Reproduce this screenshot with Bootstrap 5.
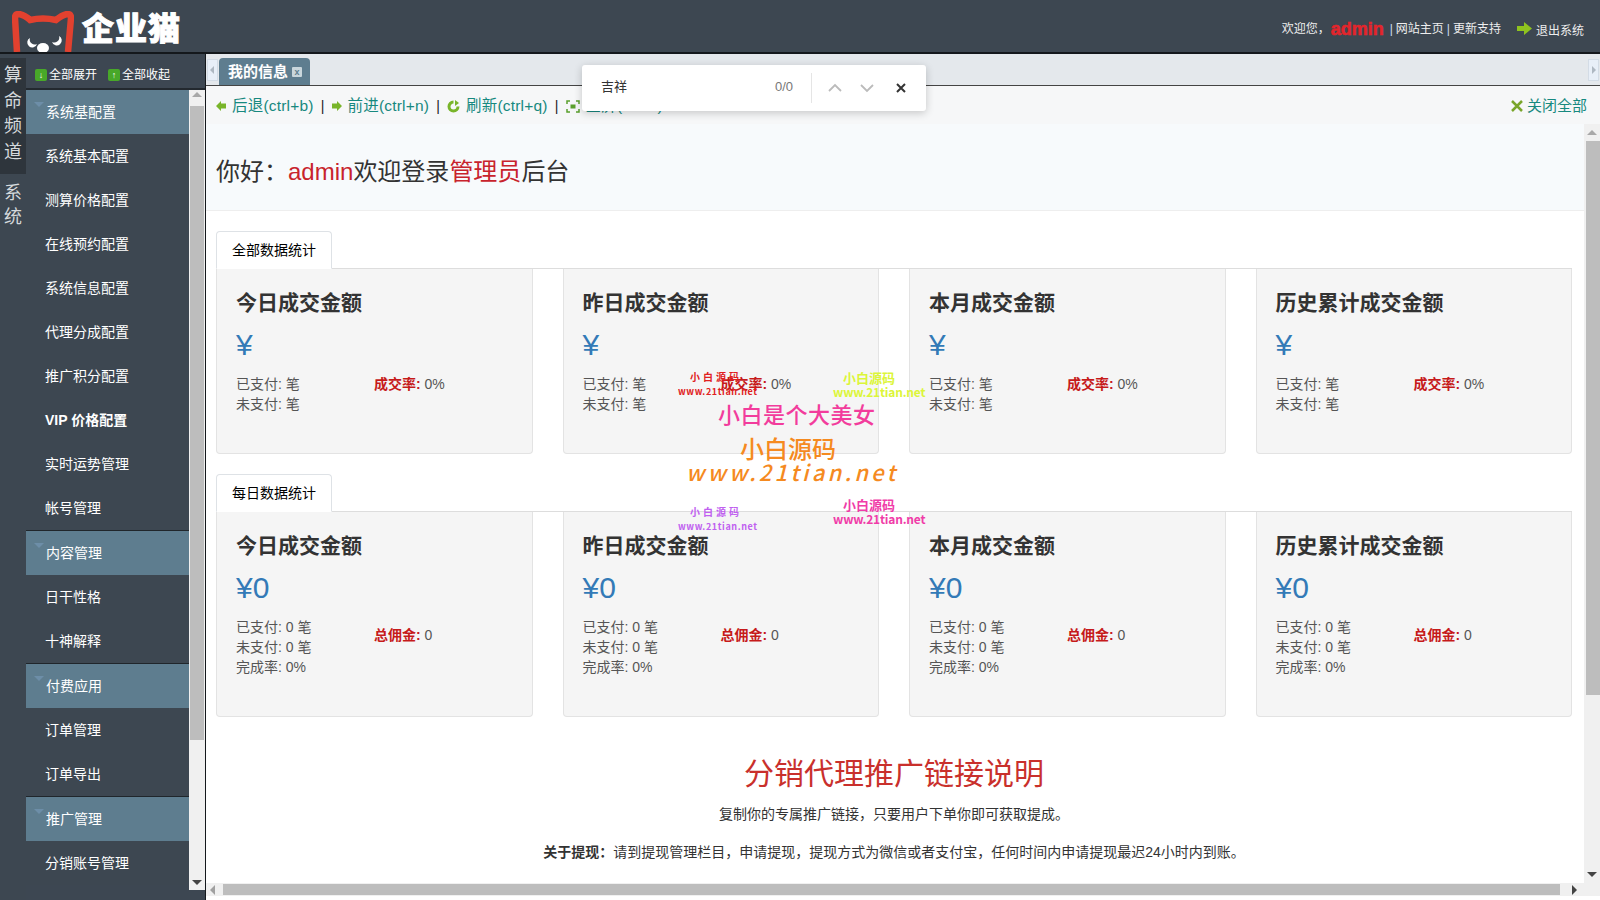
<!DOCTYPE html>
<html lang="zh-CN">
<head>
<meta charset="utf-8">
<title>企业猫后台</title>
<link rel="stylesheet" href="https://cdn.jsdelivr.net/npm/bootstrap@5.3.0/dist/css/bootstrap.min.css">
<style>
html,body{height:100%;overflow:hidden}
body{font-family:"Liberation Sans","Noto Sans CJK SC",sans-serif;font-size:14px;background:#3d4752;color:#333}
.top-bar{height:52px;background:#3d4751;color:#fff;overflow:hidden;flex:none}
.logo-word{font-family:"Noto Sans CJK SC",sans-serif;font-weight:900;font-size:32px;letter-spacing:1px;line-height:1;color:#fff;-webkit-text-stroke:1px #fff;margin-left:8px;margin-top:-1px}
.logo-svg{margin-left:12px;margin-top:11px;flex:none}
.top-links{font-size:12px;padding-right:16px;padding-top:5px;color:#eee}
.top-links .nm{color:#e3252c;font-weight:700;font-size:18px;-webkit-text-stroke:.6px #e3252c;margin:0 3px 0 1px;line-height:1}
.top-links .sp{color:#cde;margin:0 3px}
.body-row{height:848px;border-top:2px solid #14181c}
.rail{width:26px;flex:none;color:#d5d9dc;font-size:18px;line-height:25.500px;text-align:center;background:#3d4751;padding-top:4px}
.rail-on{background:#2e353c;height:116px;padding-top:5px}
.rail-off{padding-top:8px;line-height:23.500px}
.side{width:179px;flex:none}
.expand{height:36px;border-bottom:2px solid #23292f;color:#fff;font-size:12px;padding-left:9px;padding-top:7px;gap:11px;width:179px}
.expand span{gap:2px}
.ico-sq{width:12px;height:12px;background:#48a829;border-radius:2px;color:#fff;font-size:9px;line-height:12px;text-align:center;display:inline-block}
.side-body{height:800px}
.menu{width:163px;height:800px;overflow:hidden;flex:none}
.menu-head{height:44px;background:#5e7d8f;color:#fff;padding-left:20px;line-height:44px;position:relative;font-size:14px;border-bottom:0}
.menu-head.later{height:45px;border-top:1px solid #20262b}
.menu-head::before{content:"";position:absolute;left:8px;top:12px;border:5px solid transparent;border-top-color:#6d8ea8;border-bottom:0}
.menu-item{height:44px;line-height:44px;color:#fff;padding-left:19px;background:#3d4751;font-size:14px}
.vbar{width:16px;background:#f0f0f0;flex:none;position:relative}
.side-bar{height:800px}
.vthumb{background:#bdbdbd;width:14px;margin-left:1px}
.arr-t{position:absolute;left:3px;border:5px solid transparent;width:0;height:0}
.arr-up{top:2px;border-top:0;border-bottom-color:#a8a8a8}
.arr-dn{bottom:5px;border-bottom:0;border-top-color:#444}
.main-pane{border-left:1px solid #14181c;background:#fff;width:1395px;height:846px;flex:none}
.tab-strip{height:32px;background:#e4e8ec;border-bottom:1px solid #444;padding-top:4px;flex:none}
.scroller{width:11px;height:22px;background:#e8eff8;border:1px solid #d3dce6;margin:1px 1px 0 1px;flex:none;position:relative}
.scroller i{position:absolute;top:6px;left:2px;border:4px solid transparent}
.scroller .l{border-left:0;border-right-color:#aeb8c2}
.scroller .r{border-right:0;border-left-color:#aeb8c2;left:3px}
.tab-on{height:27px;width:91px;background:#5e7d8f;color:#fff;font-weight:700;font-size:15px;border-radius:4px 4px 0 0;padding-left:9px;gap:4px;line-height:25px;margin-left:0}
.tab-x{width:10px;height:10px;background:#c9d6dc;color:#5e7d8f;font-size:9px;line-height:10px;text-align:center;font-weight:700;border-radius:1px;display:inline-block}
.tools{height:38px;background:#f6f7f8;padding:2px 13px 0 10px;color:#17897f;font-size:15.500px;letter-spacing:.2px;flex:none}
.tools .pipe{color:#222;margin:0 7px 0 7px;font-size:14px}
.tools .tl-ic{margin-right:6px;flex:none}
.tools .close-all{font-size:15px;letter-spacing:0}
.scroll-wrap{height:759px;flex:none}
.scroll-view{width:1378px;height:759px;overflow:hidden;flex:none}
.hero{height:87px;background:#f7fafc;border-bottom:1px solid #eee;padding:0 0 0 10px;font-size:24px;color:#333;font-weight:400;line-height:95px}
.hero em{font-style:normal;color:#c8232c}
.stats{padding:20px 12px 0 10px}
.stats-tabs{border-bottom:1px solid #ddd;margin-bottom:0}
.stats-tabs .nav-link{padding:0 15px;height:38px;line-height:36px;color:#666;font-size:14px;border-color:#ddd #ddd #fff;border-radius:4px 4px 0 0;background:#fff;margin-bottom:-1px}
.gut-row{--bs-gutter-x:30px;--bs-gutter-y:0}
.stat-box{background:#f5f5f5;border:1px solid #e3e3e3;border-top:0;border-radius:0 0 4px 4px;padding:18px 19px;color:#555;font-size:14px;line-height:20px}
.stat-a{height:185px}
.stat-b{height:205px}
.stat-title{font-size:21px;font-weight:700;color:#333;line-height:28px;margin:0 0 9px;font-family:"Noto Sans CJK SC",sans-serif}
.stat-money{font-size:30px;line-height:42px;color:#337ab7;margin-bottom:8px;font-family:"Liberation Sans",sans-serif}
.stat-lines{width:138px;flex:none}
.rate b{color:#c61a1a}
.rate-low{margin-top:-24px}
.sec-gap{margin-top:20px}
.promo{text-align:center;padding:33px 0 0}
.promo-h{font-size:30px;color:#c9302c;line-height:42px;font-weight:400;margin-bottom:12px;font-family:"Noto Sans CJK SC",sans-serif}
.promo p{font-size:14px;color:#333;margin:0 0 18px;line-height:20px}
.main-bar{height:759px}
.main-thumb{position:absolute;top:17px;left:1px;height:554px}
.hbar{height:13px;background:#f0f0f0;flex:none;position:relative;width:1394px}
.hthumb{position:absolute;left:17px;top:1px;width:1337px;height:11px;background:#bdbdbd}
.h-l{position:absolute;left:4px;top:2px;border:5px solid transparent;border-left:0;border-right-color:#a0a0a0}
.h-r{position:absolute;left:1366px;top:2px;border:5px solid transparent;border-right:0;border-left-color:#444}
.find-box{position:absolute;left:582px;top:65px;width:344px;height:46px;background:#fff;border-radius:3px;box-shadow:0 2px 8px rgba(0,0,0,.2);z-index:10;color:#333;font-size:13px}
.find-q{position:absolute;left:19px;top:13px;line-height:18px}
.find-n{position:absolute;left:193px;top:13px;line-height:18px;color:#777;font-size:13px}
.find-div{position:absolute;left:229px;top:8px;width:1px;height:30px;background:#e5e5e5}
.find-ic{position:absolute;top:18px}
.wm{position:absolute;z-index:5;white-space:nowrap;line-height:1;font-family:"Noto Sans CJK SC",sans-serif}
</style>
</head>
<body>
<div class="top-bar d-flex justify-content-between align-items-center">
  <div class="d-flex align-items-center h-100">
    <svg class="logo-svg" width="62" height="41" viewBox="0 0 62 41">
      <path d="M5 41 L3 7 Q3 3 7 3 Q13 4 18 9 Q31 6 44 9 Q50 4 55 3 Q59 3 59 7 L56 41" fill="none" stroke="#e2412f" stroke-width="6.500"/>
      <path d="M18 27a5 5 0 1 0 7 6 5 5 0 0 1-7-6z" fill="#fff"/>
      <path d="M47 25a5 5 0 1 1-7 6 5 5 0 0 0 7-6z" fill="#fff"/>
      <ellipse cx="31" cy="37" rx="6" ry="5" fill="#fff"/>
    </svg>
    <div class="logo-word">企业猫</div>
  </div>
  <div class="top-links d-flex align-items-center">
    <span>欢迎您，</span><span class="nm">admin</span><span class="sp">|</span><span>网站主页</span><span class="sp">|</span><span>更新支持</span>
    <svg class="ms-3 me-1" width="15" height="13" viewBox="0 0 15 13"><path d="M0 4h7V0l8 6.500-8 6.500V9H0z" fill="#8fc31f"/></svg>
    <span class="pt-1">退出系统</span>
  </div>
</div>

<div class="body-row d-flex">
  <div class="rail">
    <div class="rail-on">算<br>命<br>频<br>道</div>
    <div class="rail-off">系<br>统</div>
  </div>
  <div class="side">
    <div class="expand d-flex align-items-center">
      <span class="d-inline-flex align-items-center"><i class="ico-sq fst-normal">↓</i>全部展开</span>
      <span class="d-inline-flex align-items-center"><i class="ico-sq fst-normal">↑</i>全部收起</span>
    </div>
    <div class="side-body d-flex">
      <div class="menu">
        <div class="menu-head">系统基配置</div>
        <div class="menu-item">系统基本配置</div>
        <div class="menu-item">测算价格配置</div>
        <div class="menu-item">在线预约配置</div>
        <div class="menu-item">系统信息配置</div>
        <div class="menu-item">代理分成配置</div>
        <div class="menu-item">推广积分配置</div>
        <div class="menu-item fw-semibold">VIP 价格配置</div>
        <div class="menu-item">实时运势管理</div>
        <div class="menu-item">帐号管理</div>
        <div class="menu-head later">内容管理</div>
        <div class="menu-item">日干性格</div>
        <div class="menu-item">十神解释</div>
        <div class="menu-head later">付费应用</div>
        <div class="menu-item">订单管理</div>
        <div class="menu-item">订单导出</div>
        <div class="menu-head later">推广管理</div>
        <div class="menu-item">分销账号管理</div>
      </div>
      <div class="vbar side-bar">
        <i class="arr-t arr-up"></i>
        <div class="vthumb" style="height:634px;margin-top:16px"></div>
        <i class="arr-t arr-dn"></i>
      </div>
    </div>
  </div>

  <div class="main-pane d-flex flex-column">
    <div class="tab-strip d-flex">
      <div class="scroller"><i class="l"></i></div>
      <div class="tab-on d-flex align-items-center">我的信息<i class="tab-x fst-normal">x</i></div>
      <div class="scroller ms-auto"><i class="r"></i></div>
    </div>
    <div class="tools d-flex align-items-center">
      <svg class="tl-ic" width="10" height="10" viewBox="0 0 10 10"><path d="M0 5l5-5v2.500h5v5H5V10z" fill="#79b52a"/></svg><span>后退(ctrl+b)</span><span class="pipe">|</span>
      <svg class="tl-ic" width="10" height="10" viewBox="0 0 10 10"><path d="M10 5L5 0v2.500H0v5h5V10z" fill="#79b52a"/></svg><span>前进(ctrl+n)</span><span class="pipe">|</span>
      <svg class="tl-ic" width="13" height="13" viewBox="0 0 13 13"><path d="M6.500 2a4.500 4.500 0 1 0 4.500 4.500" fill="none" stroke="#79b52a" stroke-width="3"/><path d="M8 0l4 3-4 3z" fill="#79b52a"/></svg><span>刷新(ctrl+q)</span><span class="pipe">|</span>
      <svg class="tl-ic" width="14" height="13" viewBox="0 0 14 13"><path d="M1 4V1h3M10 1h3v3M13 9v3h-3M4 12H1V9" fill="none" stroke="#5aa02c" stroke-width="1.500"/><rect x="4.500" y="4.500" width="5" height="4" fill="#5aa02c"/></svg><span>全屏(ctrl+f)</span>
      <span class="ms-auto d-inline-flex align-items-center close-all">
        <svg class="me-1" width="12" height="12" viewBox="0 0 12 12"><path d="M1 1l10 10M11 1L1 11" stroke="#79a52a" stroke-width="2.500"/></svg>关闭全部
      </span>
    </div>
    <div class="scroll-wrap d-flex">
      <div class="scroll-view">
        <h1 class="hero m-0">你好：<em>admin</em>欢迎登录<em>管理员</em>后台</h1>
        <div class="stats">
          <ul class="nav nav-tabs stats-tabs"><li class="nav-item"><span class="nav-link active">全部数据统计</span></li></ul>
          <div class="row gut-row">
            <div class="col-3"><div class="stat-box stat-a">
              <h4 class="stat-title">今日成交金额</h4><div class="stat-money">¥</div>
              <div class="d-flex"><div class="stat-lines">已支付: 笔<br>未支付: 笔</div><div class="rate"><b>成交率:</b> 0%</div></div>
            </div></div>
            <div class="col-3"><div class="stat-box stat-a">
              <h4 class="stat-title">昨日成交金额</h4><div class="stat-money">¥</div>
              <div class="d-flex"><div class="stat-lines">已支付: 笔<br>未支付: 笔</div><div class="rate"><b>成交率:</b> 0%</div></div>
            </div></div>
            <div class="col-3"><div class="stat-box stat-a">
              <h4 class="stat-title">本月成交金额</h4><div class="stat-money">¥</div>
              <div class="d-flex"><div class="stat-lines">已支付: 笔<br>未支付: 笔</div><div class="rate"><b>成交率:</b> 0%</div></div>
            </div></div>
            <div class="col-3"><div class="stat-box stat-a">
              <h4 class="stat-title">历史累计成交金额</h4><div class="stat-money">¥</div>
              <div class="d-flex"><div class="stat-lines">已支付: 笔<br>未支付: 笔</div><div class="rate"><b>成交率:</b> 0%</div></div>
            </div></div>
          </div>
          <ul class="nav nav-tabs stats-tabs sec-gap"><li class="nav-item"><span class="nav-link active">每日数据统计</span></li></ul>
          <div class="row gut-row">
            <div class="col-3"><div class="stat-box stat-b">
              <h4 class="stat-title">今日成交金额</h4><div class="stat-money">¥0</div>
              <div class="d-flex align-items-center"><div class="stat-lines">已支付: 0 笔<br>未支付: 0 笔<br>完成率: 0%</div><div class="rate rate-low"><b>总佣金:</b> 0</div></div>
            </div></div>
            <div class="col-3"><div class="stat-box stat-b">
              <h4 class="stat-title">昨日成交金额</h4><div class="stat-money">¥0</div>
              <div class="d-flex align-items-center"><div class="stat-lines">已支付: 0 笔<br>未支付: 0 笔<br>完成率: 0%</div><div class="rate rate-low"><b>总佣金:</b> 0</div></div>
            </div></div>
            <div class="col-3"><div class="stat-box stat-b">
              <h4 class="stat-title">本月成交金额</h4><div class="stat-money">¥0</div>
              <div class="d-flex align-items-center"><div class="stat-lines">已支付: 0 笔<br>未支付: 0 笔<br>完成率: 0%</div><div class="rate rate-low"><b>总佣金:</b> 0</div></div>
            </div></div>
            <div class="col-3"><div class="stat-box stat-b">
              <h4 class="stat-title">历史累计成交金额</h4><div class="stat-money">¥0</div>
              <div class="d-flex align-items-center"><div class="stat-lines">已支付: 0 笔<br>未支付: 0 笔<br>完成率: 0%</div><div class="rate rate-low"><b>总佣金:</b> 0</div></div>
            </div></div>
          </div>
          <div class="promo">
            <div class="promo-h">分销代理推广链接说明</div>
            <p>复制你的专属推广链接，只要用户下单你即可获取提成。</p>
            <p><b>关于提现：</b>请到提现管理栏目，申请提现，提现方式为微信或者支付宝，任何时间内申请提现最迟24小时内到账。</p>
          </div>
        </div>
      </div>
      <div class="vbar main-bar">
        <i class="arr-t arr-up" style="top:6px"></i>
        <div class="vthumb main-thumb"></div>
        <i class="arr-t arr-dn" style="bottom:6px"></i>
      </div>
    </div>
    <div class="hbar"><i class="h-l"></i><div class="hthumb"></div><i class="h-r"></i></div>
  </div>
</div>

<div class="find-box">
  <span class="find-q">吉祥</span><span class="find-n">0/0</span><span class="find-div"></span>
  <svg class="find-ic" style="left:246px" width="14" height="10" viewBox="0 0 14 10"><path d="M1 8l6-6 6 6" fill="none" stroke="#bbb" stroke-width="1.800"/></svg>
  <svg class="find-ic" style="left:278px" width="14" height="10" viewBox="0 0 14 10"><path d="M1 2l6 6 6-6" fill="none" stroke="#bbb" stroke-width="1.800"/></svg>
  <svg class="find-ic" style="left:314px" width="10" height="10" viewBox="0 0 10 10"><path d="M1 1l8 8M9 1L1 9" fill="none" stroke="#333" stroke-width="2"/></svg>
</div>

<span class="wm" style="left:690px;top:372px;font-size:10px;letter-spacing:3px;color:#e02020;font-weight:700">小白源码</span>
<span class="wm" style="left:678px;top:387px;font-size:9px;letter-spacing:.6px;color:#e02020;font-weight:700">www.21tian.net</span>
<span class="wm" style="left:843px;top:371px;font-size:13px;color:#dcf53a;font-weight:700">小白源码</span>
<span class="wm" style="left:833px;top:386px;font-size:12px;letter-spacing:-.2px;color:#dcf53a;font-weight:700">www.21tian.net</span>
<span class="wm" style="left:718px;top:402px;font-size:22px;letter-spacing:.5px;color:#f23c9c;font-weight:500">小白是个大美女</span>
<span class="wm" style="left:740px;top:436px;font-size:24px;color:#f58a1f;font-weight:500">小白源码</span>
<span class="wm" style="left:686px;top:460px;font-size:22px;letter-spacing:3.200px;color:#f58a1f;font-weight:500;font-style:italic">www.21tian.net</span>
<span class="wm" style="left:690px;top:507px;font-size:10px;letter-spacing:3px;color:#c060f0;font-weight:700">小白源码</span>
<span class="wm" style="left:678px;top:522px;font-size:9px;letter-spacing:.6px;color:#c060f0;font-weight:700">www.21tian.net</span>
<span class="wm" style="left:843px;top:498px;font-size:13px;color:#f03ca8;font-weight:700">小白源码</span>
<span class="wm" style="left:833px;top:513px;font-size:12px;letter-spacing:-.2px;color:#f03ca8;font-weight:700">www.21tian.net</span>

<script src="https://cdn.jsdelivr.net/npm/bootstrap@5.3.0/dist/js/bootstrap.bundle.min.js"></script>
</body>
</html>
